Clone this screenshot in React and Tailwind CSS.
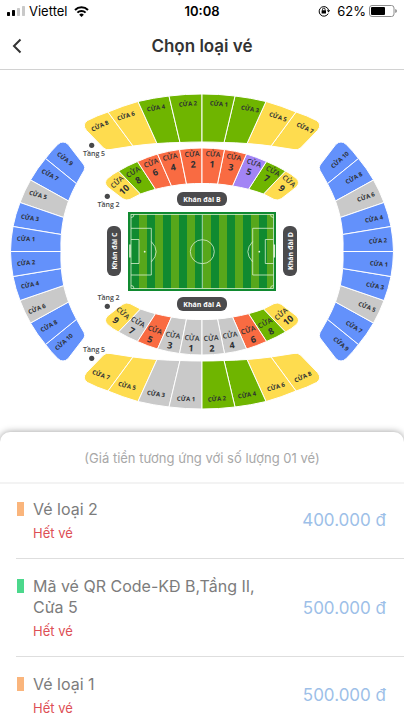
import React from "react";

const FILL = {
  yellow: "#fedc4f",
  green: "#6fb500",
  orange: "#f96b42",
  purple: "#a284f5",
  gray: "#c9c9c9",
  blue: "#6391fb",
};

const WIDTH = 404;
const MIDDLE = 503;

/* Each stand lists its dividers as [outerX, outerY, innerX, innerY], from the end to the middle. */
const OUTER_STAND = {
  cuts: [[108, 112, 133, 146], [138, 101.5, 157, 143.5], [169, 96, 180, 142.5], [202, 94, 202, 142]],
  outerRadius: 255,
  innerRadius: 480,
  end: "M108 112 L133 146 L110 149.6 Q106 150.4 103.5 148 L86.5 130.5 Q81.5 124.5 87.5 120.5 Q97 115.5 108 112 Z",
};
const INNER_STAND = {
  cuts: [[118.5, 171, 140.5, 194], [137.5, 161.5, 155.5, 189.3], [157.5, 154, 171.5, 186], [179.5, 149.5, 186.5, 184], [202, 148, 202, 183.5]],
  outerRadius: 155,
  innerRadius: 170,
  end: "M118.5 171 L140.5 194 L130 199.4 Q126 201 122.5 198.6 L107.5 187 Q103.5 182.5 107.5 178.6 Q112.5 174 118.5 171 Z",
};
const SIDE_STAND = {
  cuts: [[45.5, 158.5, 76.5, 183.7], [30.5, 180, 68.5, 201], [20, 202.5, 63.7, 217.5], [13, 226.5, 61.3, 234.5], [10.5, 251.5, 61, 251.5]],
  outerRadius: 145,
  innerRadius: 160,
  end: "M45.5 158.5 L76.5 183.7 L84 170.5 Q85.5 167.5 84 165 L68 144.2 Q63 139.8 58 144.2 Q51 151 45.5 158.5 Z",
};

function block(stand, i, sweep) {
  if (i === 0) return stand.end;
  const [ax, ay, bx, by] = stand.cuts[i - 1];
  const [cx, cy, dx, dy] = stand.cuts[i];
  const o = stand.outerRadius;
  const n = stand.innerRadius;
  return `M${ax} ${ay} A${o} ${o} 0 0 ${sweep} ${cx} ${cy} L${dx} ${dy} A${n} ${n} 0 0 ${1 - sweep} ${bx} ${by} Z`;
}

const GROUPS = [
  { stand: OUTER_STAND, sweep: 1, colors: ["yellow", "yellow", "green", "green"] },
  { stand: OUTER_STAND, sweep: 1, flipX: true, colors: ["yellow", "yellow", "green", "green"] },
  { stand: OUTER_STAND, sweep: 1, flipY: true, colors: ["yellow", "yellow", "gray", "gray"] },
  { stand: OUTER_STAND, sweep: 1, flipX: true, flipY: true, colors: ["yellow", "yellow", "green", "green"] },
  { stand: INNER_STAND, sweep: 1, colors: ["yellow", "green", "orange", "orange", "orange"] },
  { stand: INNER_STAND, sweep: 1, flipX: true, colors: ["yellow", "green", "purple", "orange", "orange"] },
  { stand: INNER_STAND, sweep: 1, flipY: true, colors: ["yellow", "gray", "orange", "gray", "gray"] },
  { stand: INNER_STAND, sweep: 1, flipX: true, flipY: true, colors: ["yellow", "green", "orange", "gray", "gray"] },
  { stand: SIDE_STAND, sweep: 0, colors: ["blue", "blue", "gray", "blue", "blue"] },
  { stand: SIDE_STAND, sweep: 0, flipX: true, colors: ["blue", "blue", "gray", "blue", "blue"] },
  { stand: SIDE_STAND, sweep: 0, flipY: true, colors: ["blue", "blue", "gray", "blue", "blue"] },
  { stand: SIDE_STAND, sweep: 0, flipX: true, flipY: true, colors: ["blue", "blue", "gray", "blue", "blue"] },
];

/* [gate number, x, y, angle] */
const GATES = [
  [8, 100, 126, -25], [6, 126, 116, -18], [4, 156, 108, -10], [2, 188, 104, -4],
  [1, 219, 104, 4], [3, 250, 109, 10], [5, 278, 117, 18], [7, 305, 128, 25],
  [7, 101, 375, 20], [5, 127, 386, 14], [3, 156, 394, 8], [1, 186, 399, 2],
  [2, 217, 399, -4], [4, 247, 395, -10], [6, 276, 387, -17], [8, 303, 377, -25],
  [9, 65, 159, 37], [7, 50, 175, 28], [5, 38, 195, 16], [3, 30, 218, 9], [1, 26, 239, 2],
  [2, 26, 263, -6], [4, 30, 285, -12], [6, 37, 309, -22], [8, 49, 326, -30], [10, 64, 342, -42],
  [10, 340, 160, -42], [8, 354, 178, -30], [6, 366, 197, -20], [4, 374, 219, -12], [2, 378, 241, -4],
  [1, 379, 264, 4], [3, 375, 286, 11], [5, 367, 307, 22], [7, 354, 327, 31], [9, 341, 344, 40],
];

/* [gate number, word x, word y, number x, number y, angle] */
const INNER_GATES = [
  [10, 117, 182, 124, 189.5, -42], [8, 133, 172, 138, 180, -32], [6, 151, 163, 155, 172, -22],
  [4, 170, 157, 173, 167, -12], [2, 192, 154, 193, 164, -4], [1, 213, 154, 212, 164, 4],
  [3, 234, 157, 231, 167, 10], [5, 254, 163, 249, 171.5, 18], [7, 273, 171, 267, 178, 28], [9, 289, 181, 282, 188, 42],
  [9, 123, 313, 116, 320, 42], [7, 138, 322, 132, 330.5, 30], [5, 155, 330, 150, 339, 20],
  [3, 173, 335, 170, 345, 10], [1, 192, 338, 191, 348, 3], [2, 211, 338, 212, 348, -3],
  [4, 230, 335, 232, 345, -9], [6, 248, 330, 253, 339, -18], [8, 265, 323, 271, 331, -28], [10, 281, 314, 288, 320, -40],
];

const FLOORS = [
  ["Tầng 5", 94, 153.5, 91.7, 145.3],
  ["Tầng 2", 108.5, 204, 107.3, 196.3],
  ["Tầng 2", 108.5, 297, 107.3, 306.3],
  ["Tầng 5", 94, 349.5, 91.7, 358.3],
];

const PILLS = [
  ["Khán đài B", 202, 199, 0],
  ["Khán đài A", 202, 304, 0],
  ["Khán đài C", 114, 251, -90],
  ["Khán đài D", 290, 251, -90],
];

const STRIPES = [139, 155, 171, 187, 203, 219, 235, 251, 267];

function Label({ x, y, angle = 0, size = 6, weight = 600, fill = "#2c2f33", children }) {
  return (
    <text
      transform={`translate(${x} ${y}) rotate(${angle})`}
      textAnchor="middle"
      dominantBaseline="central"
      fontSize={size}
      fontWeight={weight}
      fill={fill}
    >
      {children}
    </text>
  );
}

function Pitch() {
  return (
    <g>
      <rect x="128" y="212" width="148" height="79" fill="#108a30" />
      {STRIPES.map((x) => (
        <rect key={x} x={x} y="214" width={x === 267 ? 6 : 8} height="75" fill="#57a71b" />
      ))}
      <g fill="none" stroke="#d9efcf" strokeWidth="0.8">
        <rect x="131" y="214.5" width="142.5" height="74" />
        <path d="M202.3 214.5V288.5" />
        <circle cx="202.3" cy="251.7" r="12" />
        <path d="M131 228.3H151.3V275H131M131 239.5H139V263.5H131M151.3 241.5Q161 251.7 151.3 262" />
        <path d="M273.5 228.3H252.7V275H273.5M273.5 239.5H265.3V263.5H273.5M252.7 241.5Q243 251.7 252.7 262" />
        <path d="M131 217.5Q134 217.5 134 214.5M131 285.5Q134 285.5 134 288.5M273.5 217.5Q270.5 217.5 270.5 214.5M273.5 285.5Q270.5 285.5 270.5 288.5" />
        <path d="M130 244.5V257.5M274.3 244.5V257.5" strokeWidth="1.6" />
      </g>
      <circle cx="144.7" cy="251.7" r="0.9" fill="#e8f6df" />
      <circle cx="259.3" cy="251.7" r="0.9" fill="#e8f6df" />
    </g>
  );
}

function StadiumMap() {
  return (
    <svg
      viewBox="0 70 404 362"
      className="block w-full font-['Open_Sans','Noto_Sans',sans-serif]"
      role="img"
      aria-label="Sơ đồ khán đài"
    >
      {GROUPS.map((g, gi) => (
        <g
          key={gi}
          transform={`matrix(${g.flipX ? -1 : 1} 0 0 ${g.flipY ? -1 : 1} ${g.flipX ? WIDTH : 0} ${g.flipY ? MIDDLE : 0})`}
          stroke="#fff"
          strokeWidth="1"
        >
          {g.colors.map((c, i) => (
            <path key={i} d={block(g.stand, i, g.sweep)} fill={FILL[c]} />
          ))}
        </g>
      ))}
      {GATES.map(([n, x, y, a], i) => (
        <Label key={i} x={x} y={y} angle={a} weight={700}>{`CỬA ${n}`}</Label>
      ))}
      {INNER_GATES.map(([n, x, y, nx, ny, a], i) => (
        <g key={i}>
          <Label x={x} y={y} angle={a} size={7}>CỬA</Label>
          <Label x={nx} y={ny} angle={a} size={9} weight={700}>{n}</Label>
        </g>
      ))}
      {FLOORS.map(([name, x, y, dx, dy], i) => (
        <g key={i}>
          <Label x={x} y={y} size={7} fill="#47484a">{name}</Label>
          <circle cx={dx} cy={dy} r="2.6" fill="#47484a" />
        </g>
      ))}
      {PILLS.map(([name, x, y, a]) => (
        <g key={name}>
          <rect x="-25" y="-7" width="50" height="14" rx="6" fill="#4b4b4d" transform={`translate(${x} ${y}) rotate(${a})`} />
          <Label x={x} y={y} angle={a} size={7} weight={700} fill="#fff">{name}</Label>
        </g>
      ))}
      <Pitch />
    </svg>
  );
}

function StatusBar() {
  return (
    <div className="grid h-[22px] shrink-0 grid-cols-3 items-center pr-[7px] pl-[7px] text-[13px] leading-4 text-black">
      <div className="flex items-center gap-1">
        <svg className="h-[10px] w-[18px]" viewBox="0 0 18 10" aria-hidden="true">
          <rect x="0" y="6" width="3" height="4" rx="0.7" />
          <rect x="5" y="4" width="3" height="6" rx="0.7" />
          <rect x="10" y="2" width="3" height="8" rx="0.7" fill="#c9c9c9" />
          <rect x="15" y="0" width="3" height="10" rx="0.7" fill="#c9c9c9" />
        </svg>
        <span>Viettel</span>
        <svg className="ml-0.5 h-[11px] w-[15px]" viewBox="0 0 15 11" aria-hidden="true">
          <path d="M1 3.9A9.4 9.4 0 0 1 14 3.9" fill="none" stroke="#000" strokeWidth="2.1" />
          <path d="M3.4 6.6A5.8 5.8 0 0 1 11.6 6.6" fill="none" stroke="#000" strokeWidth="2" />
          <path d="M7.5 11L5.2 8.7A3.2 3.2 0 0 1 9.8 8.7Z" />
        </svg>
      </div>
      <div className="text-center font-semibold">10:08</div>
      <div className="flex items-center justify-end gap-[3px]">
        <svg className="mr-1 h-3 w-3" viewBox="0 0 12 12" aria-hidden="true">
          <path d="M10.2 8.6A4.8 4.8 0 1 1 10.6 5.2" fill="none" stroke="#000" strokeWidth="1" />
          <path d="M8.8 5.2H12.2L10.5 7.6Z" />
          <rect x="3.6" y="5.2" width="4.4" height="3.4" rx="0.4" />
          <path d="M4.5 5.4V4.4A1.3 1.3 0 0 1 7.1 4.4V5.4" fill="none" stroke="#000" strokeWidth="0.9" />
        </svg>
        <span>62%</span>
        <svg className="h-3 w-7" viewBox="0 0 28 12" aria-hidden="true">
          <rect x="0.5" y="0.5" width="24.5" height="11" rx="2.5" fill="none" stroke="#8e8e8e" />
          <rect x="2" y="2" width="14" height="8" rx="1" />
          <path d="M26.2 4Q28 4.6 28 6Q28 7.4 26.2 8Z" fill="#8e8e8e" />
        </svg>
      </div>
    </div>
  );
}

const TICKETS = [
  { name: "Vé loại 2", status: "Hết vé", price: "400.000 đ", marker: "bg-[#fab57c]" },
  { name: "Mã vé QR Code-KĐ B,Tầng II, Cửa 5", status: "Hết vé", price: "500.000 đ", marker: "bg-[#4cd88c]" },
  { name: "Vé loại 1", status: "Hết vé", price: "500.000 đ", marker: "bg-[#fab57c]" },
];

function Ticket({ name, status, price, marker }) {
  return (
    <li className="flex items-center gap-4 border-b border-[#dedede] pt-[17px] pr-[18px] pb-4 first:pt-[15px]">
      <div className="flex min-w-0 flex-1 items-start gap-[9px]">
        <span className={`mt-[3px] ml-px h-[14px] w-[7px] shrink-0 ${marker}`} />
        <div>
          <h2 className="text-[16px] leading-[21px] text-[#7c7c7c]">{name}</h2>
          <p className="mt-1 text-[13px] leading-[18px] text-[#dd4f55]">{status}</p>
        </div>
      </div>
      <span className="shrink-0 text-[17px] leading-[21px] text-[#9dbfe8]">{price}</span>
    </li>
  );
}

export default function App() {
  return (
    <div className="flex h-screen flex-col overflow-hidden bg-white font-['Inter','Noto_Sans',sans-serif]">
      <StatusBar />
      <header className="grid h-12 shrink-0 grid-cols-[40px_1fr_40px] items-center border-b border-[#d2d2d2]">
        <button type="button" aria-label="Quay lại" className="flex h-10 items-center pl-3">
          <svg className="h-4 w-[10px]" viewBox="0 0 10 16" fill="none" stroke="#333" strokeWidth="2" aria-hidden="true">
            <path d="M8.5 1.5L2 8L8.5 14.5" />
          </svg>
        </button>
        <h1 className="text-center text-[17px] leading-6 font-semibold text-[#333]">Chọn loại vé</h1>
      </header>
      <main className="flex min-h-0 flex-1 flex-col">
        <div className="shrink-0">
          <StadiumMap />
        </div>
        <section className="flex min-h-0 flex-1 flex-col rounded-t-[10px] bg-white shadow-[0_0_7px_rgba(0,0,0,0.4)]">
          <p className="shrink-0 border-b-2 border-[#f3f3f3] pt-4 pb-[14px] text-center text-[13px] leading-5 text-[#a8a8a8]">
            (Giá tiền tương ứng với số lượng 01 vé)
          </p>
          <ul className="min-h-0 flex-1 overflow-y-auto pl-4 [scrollbar-width:none]">
            {TICKETS.map((t) => (
              <Ticket key={t.name} {...t} />
            ))}
          </ul>
        </section>
      </main>
    </div>
  );
}
